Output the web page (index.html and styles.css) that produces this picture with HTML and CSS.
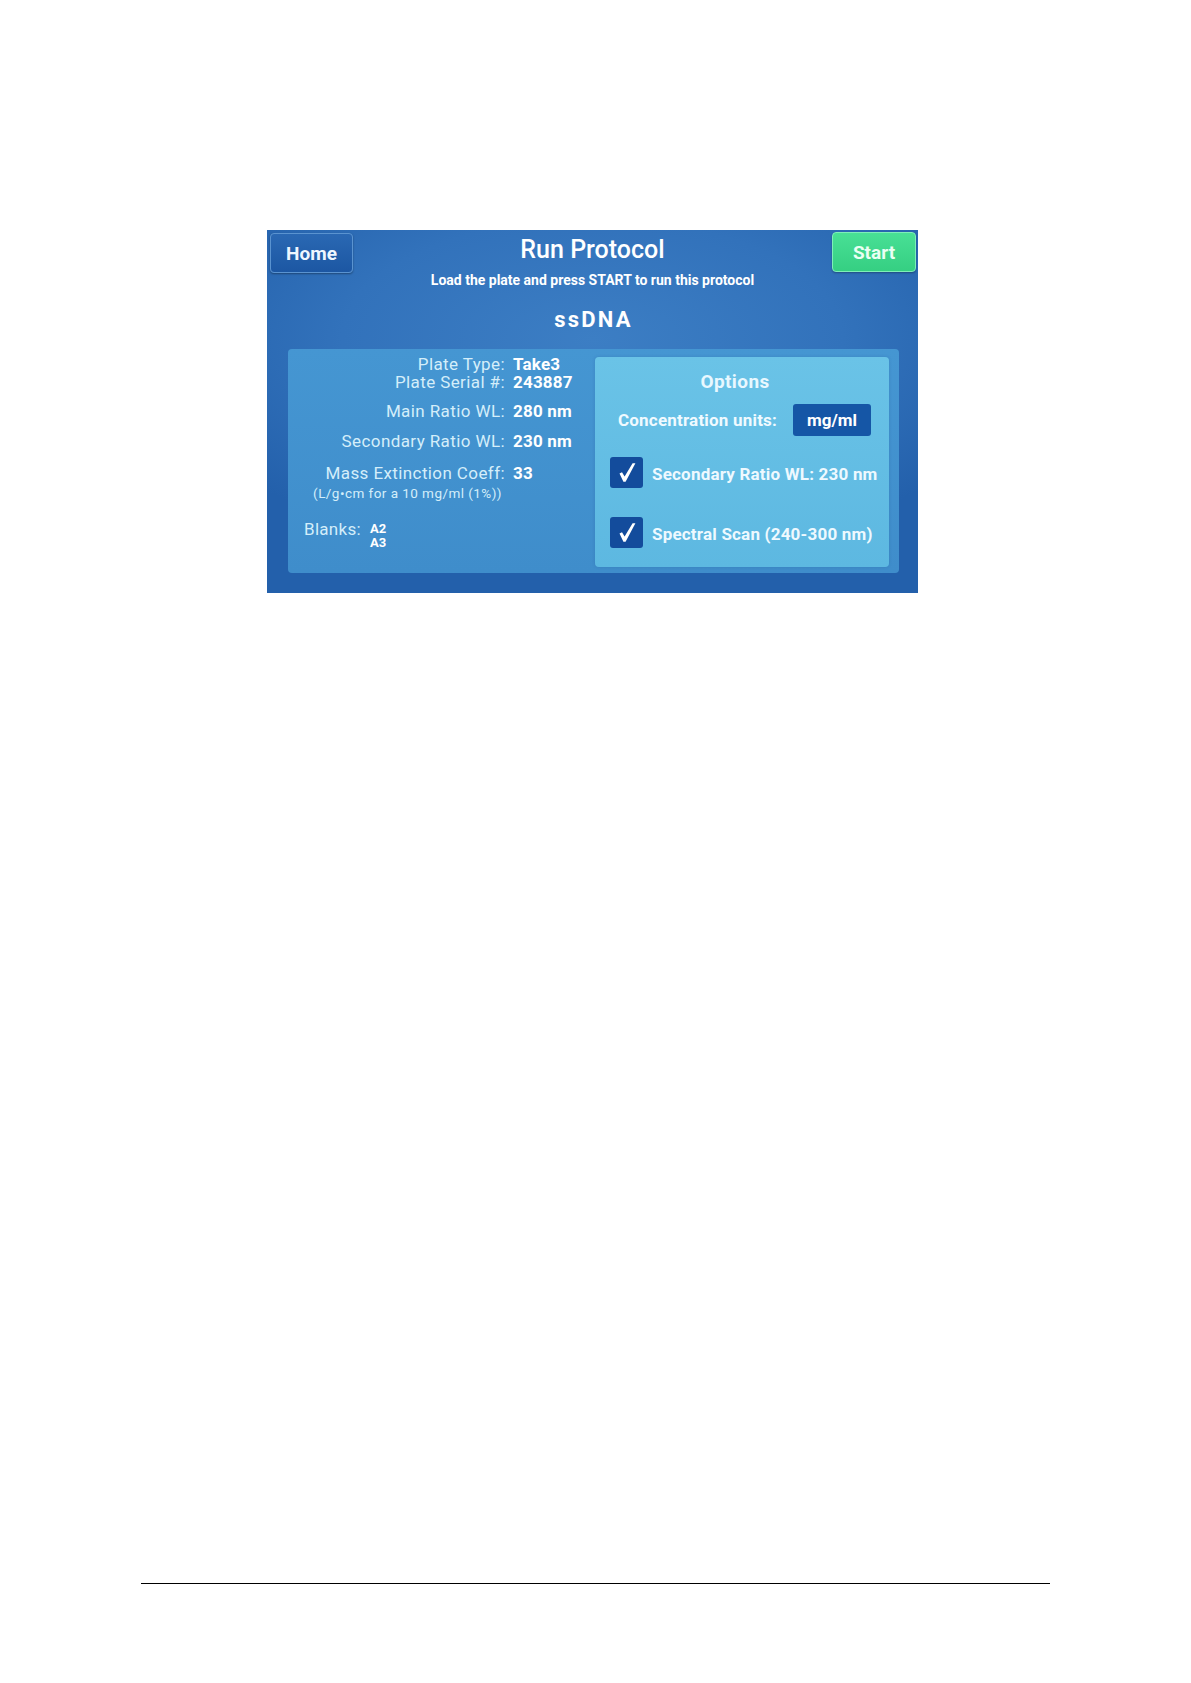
FILE: index.html
```html
<!DOCTYPE html>
<html>
<head>
<meta charset="utf-8">
<link rel="stylesheet" href="styles.css">
</head>
<body>
<div class="page">
  <div class="screen">
    <div class="header">
      <div class="btn btn-home">Home</div>
      <div class="center">
        <div class="title">Run Protocol</div>
        <div class="subtitle">Load the plate and press START to run this protocol</div>
      </div>
      <div class="btn btn-start">Start</div>
    </div>
    <div class="protocol">ssDNA</div>
    <div class="panel">
      <div class="info">
        <div class="row r1"><span class="lbl">Plate Type:</span><span class="val">Take3</span></div>
        <div class="row r2"><span class="lbl">Plate Serial #:</span><span class="val">243887</span></div>
        <div class="row r3"><span class="lbl">Main Ratio WL:</span><span class="val">280 nm</span></div>
        <div class="row r4"><span class="lbl">Secondary Ratio WL:</span><span class="val">230 nm</span></div>
        <div class="row r5"><span class="lbl">Mass Extinction Coeff:</span><span class="val">33</span></div>
        <div class="row note"><span class="lbl">(L/g•cm for a 10 mg/ml (1%))</span></div>
        <div class="blanks">
          <span class="blbl">Blanks:</span>
          <div class="wells"><div>A2</div><div>A3</div></div>
        </div>
      </div>
      <div class="options">
        <div class="opt-title">Options</div>
        <div class="units">
          <span class="units-lbl">Concentration units:</span>
          <span class="units-box">mg/ml</span>
        </div>
        <div class="check c1">
          <span class="box"><svg viewBox="0 0 33 31" width="33" height="31"><path d="M9.5 16.6 L12 15.2 L14.6 19.6 L22.6 6.2 L25.4 6.2 L15.6 24.8 L13.4 24.8 Z" fill="#ffffff"/></svg></span>
          <span class="check-lbl">Secondary Ratio WL: 230 nm</span>
        </div>
        <div class="check c2">
          <span class="box"><svg viewBox="0 0 33 31" width="33" height="31"><path d="M9.5 16.6 L12 15.2 L14.6 19.6 L22.6 6.2 L25.4 6.2 L15.6 24.8 L13.4 24.8 Z" fill="#ffffff"/></svg></span>
          <span class="check-lbl">Spectral Scan (240-300 nm)</span>
        </div>
      </div>
    </div>
  </div>
  <div class="rule"></div>
</div>
</body>
</html>
```
FILE: styles.css
```css
html, body {
  margin: 0;
  padding: 0;
  background: #ffffff;
}
.page {
  padding-top: 230px;
  font-family: Roboto, "Liberation Sans", Arial, sans-serif;
}
.screen {
  margin-left: 267px;
  width: 651px;
  height: 363px;
  box-sizing: border-box;
  background: radial-gradient(ellipse 70% 60% at 50% 30%, #3c7ec4 0%, #3272bb 55%, #2360ab 100%);
  display: flex;
  flex-direction: column;
  color: #ffffff;
}
.header {
  display: grid;
  grid-template-columns: 83px 1fr 84px;
  padding: 2px 2px 0 3px;
  align-items: start;
}
.btn {
  box-sizing: border-box;
  height: 40px;
  border-radius: 4px;
  display: flex;
  align-items: center;
  justify-content: center;
  font-weight: 700;
  font-size: 19px;
}
.btn-home {
  margin-top: 1px;
  background: linear-gradient(#2a68b3, #1c57a3);
  border: 1px solid #5a93d0;
  box-shadow: 0 1px 2px rgba(0,0,0,0.35);
  color: #eef6ff;
}
.btn-start {
  background: linear-gradient(#48e095, #35cf82);
  border: 1px solid #7eefb8;
  box-shadow: 0 1px 2px rgba(0,0,0,0.3);
  color: #eafff3;
}
.center {
  padding-top: 4px;
  text-align: center;
}
.title {
  font-size: 25px;
  line-height: 28px;
  font-weight: 500;
}
.subtitle {
  margin-top: 8px;
  font-size: 14px;
  line-height: 16px;
  font-weight: 700;
}
.protocol {
  margin-top: 20px;
  text-align: center;
  font-size: 22px;
  line-height: 24px;
  font-weight: 700;
  letter-spacing: 2.2px;
  padding-left: 2px;
}
.panel {
  margin: 17px 19px 0 21px;
  height: 224px;
  border-radius: 4px;
  background: linear-gradient(#4596d2, #3f8dcb);
  display: flex;
}
.info {
  flex: 1;
  padding-top: 6px;
  display: flex;
  flex-direction: column;
}
.row {
  display: grid;
  grid-template-columns: 217px auto;
  column-gap: 8px;
  font-size: 17px;
  line-height: 18px;
}
.lbl {
  text-align: right;
  color: #d4eefa;
  letter-spacing: 0.4px;
}
.val {
  font-weight: 700;
  color: #ffffff;
  letter-spacing: 0.2px;
}
.r3 { margin-top: 11px; }
.r4 { margin-top: 12px; }
.r5 { margin-top: 14px; }
.note {
  margin-top: 2.5px;
  font-size: 13.5px;
  line-height: 16px;
}
.note .lbl {
  white-space: nowrap;
  letter-spacing: 0.45px;
  padding-right: 3px;
}
.blanks {
  margin-top: 19.5px;
  padding-left: 16px;
  display: flex;
  align-items: flex-start;
  gap: 9px;
  font-size: 17px;
  line-height: 18px;
}
.blbl {
  color: #d4eefa;
  letter-spacing: 0.3px;
}
.wells {
  margin-top: 1.5px;
  font-size: 13px;
  line-height: 14px;
  font-weight: 700;
}
.options {
  width: 294px;
  margin: 8px 10px 6px 0;
  border-radius: 4px;
  background: linear-gradient(#6ac3e7, #5db8e1);
  box-shadow: 0 0 3px rgba(30,80,140,0.25);
  display: flex;
  flex-direction: column;
  padding-top: 14px;
  box-sizing: border-box;
}
.opt-title {
  text-align: center;
  padding-right: 14px;
  font-size: 19px;
  line-height: 22px;
  font-weight: 700;
  letter-spacing: 0.4px;
  color: #e8f8ff;
}
.units {
  margin-top: 11px;
  padding: 0 18px 0 23px;
  display: flex;
  align-items: center;
  justify-content: space-between;
}
.units-lbl {
  font-size: 17px;
  font-weight: 700;
  letter-spacing: 0.2px;
  color: #f0faff;
}
.units-box {
  width: 78px;
  height: 32px;
  border-radius: 3px;
  background: #1556a6;
  display: flex;
  align-items: center;
  justify-content: center;
  font-size: 17px;
  font-weight: 700;
  color: #ffffff;
}
.check {
  display: flex;
  align-items: center;
  padding-left: 15px;
  gap: 9px;
}
.c1 { margin-top: 21px; }
.c2 { margin-top: 29px; }
.box {
  width: 33px;
  height: 31px;
  border-radius: 3px;
  background: #134c9c;
  display: block;
  flex: none;
}
.box svg {
  display: block;
}
.check-lbl {
  font-size: 17px;
  font-weight: 700;
  letter-spacing: 0.2px;
  color: #eef9ff;
  white-space: nowrap;
  position: relative;
  top: 1px;
}
.rule {
  margin-top: 990px;
  margin-left: 141px;
  width: 909px;
  height: 1px;
  background: #000000;
}
```
